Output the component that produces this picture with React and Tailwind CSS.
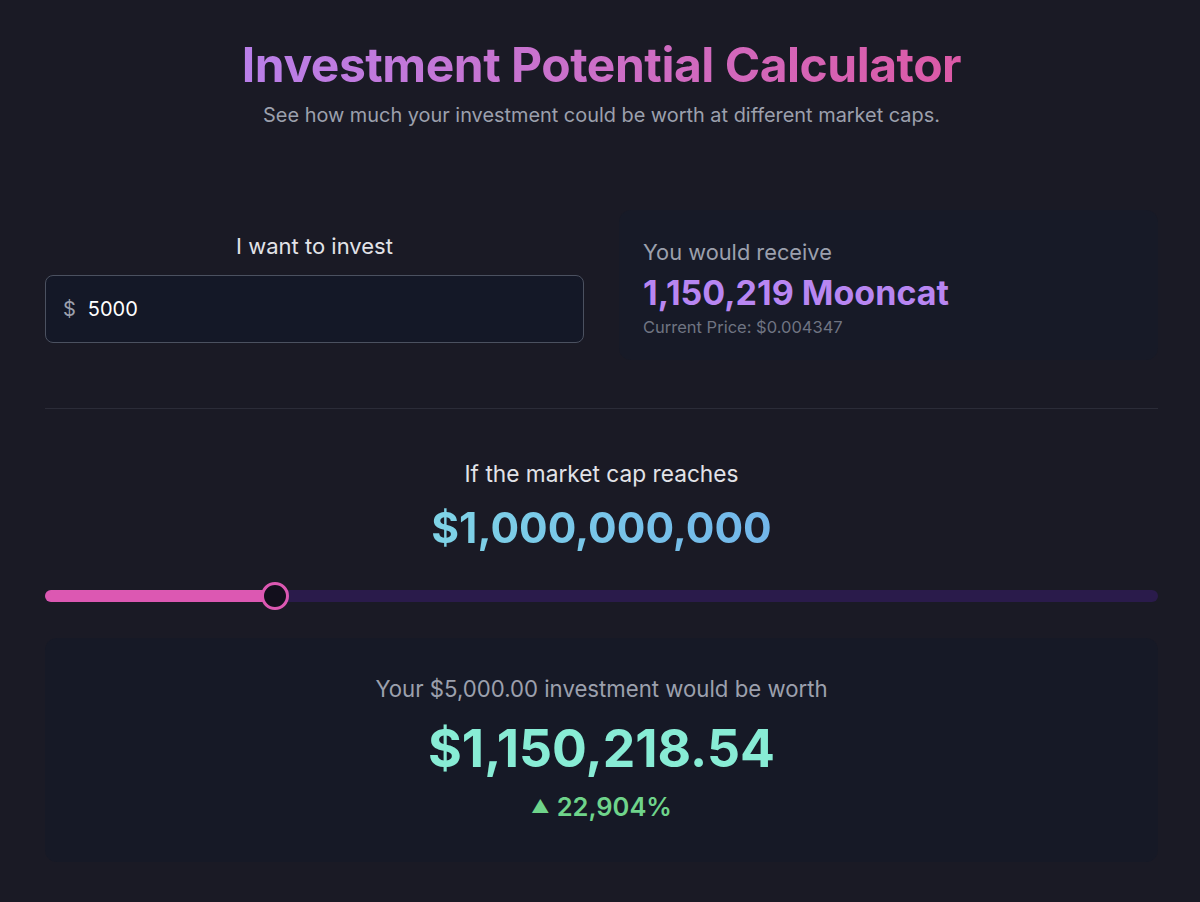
import React, { useState } from 'react';

const PRICE = 0.004347;

const fmtUsd = (n) =>
  '$' + n.toLocaleString('en-US', { minimumFractionDigits: 2, maximumFractionDigits: 2 });

const App = () => {
  const [amount, setAmount] = useState('5000');
  const [pct] = useState(20.66);

  const invest = parseFloat(amount) || 0;
  const tokens = invest / PRICE;

  return (
    <div
      className="min-h-[902px] w-full bg-[#1a1a25] text-gray-200"
      style={{ fontFamily: 'Inter, "Noto Sans", sans-serif' }}
    >
      <div className="mx-auto pl-[45px] pr-[42px] pt-[36px] pb-10">
        <div className="text-center">
          <h1 className="text-[48px] leading-[58px] font-bold tracking-[-0.5px] bg-gradient-to-r from-[#b97fe9] to-[#dc59a6] bg-clip-text text-transparent inline-block">
            Investment Potential Calculator
          </h1>
          <p className="mt-[7px] text-[19.9px] leading-[28px] text-[#9ca0ad]">
            See how much your investment could be worth at different market caps.
          </p>
        </div>

        <div className="mt-[81px] grid grid-cols-2 gap-[35px] items-center">
          <div className="flex flex-col items-center pt-[4px]">
            <label className="text-[22px] text-[#e2e3e8] leading-[30px]">I want to invest</label>
            <div className="mt-[14px] w-full h-[68px] flex items-center rounded-lg border border-[#4b5160] bg-[#141827] px-[17px]">
              <span className="text-[20px] text-[#9ca0ad] mr-[12px]">$</span>
              <input
                value={amount}
                onChange={(e) => setAmount(e.target.value)}
                className="bg-transparent outline-none text-[20px] text-white w-full"
              />
            </div>
          </div>
          <div className="h-[150px] rounded-xl bg-[#171a27] px-[24px] pt-[27px] flex flex-col">
            <div className="text-[21.8px] text-[#9ca0ad] leading-[30px]">You would receive</div>
            <div className="mt-[6px] text-[34px] font-bold text-[#b886f2] leading-[40px]">
              {Math.round(tokens).toLocaleString('en-US')} Mooncat
            </div>
            <div className="mt-[3px] text-[16.5px] text-[#6f7482] leading-[22px]">Current Price: ${PRICE}</div>
          </div>
        </div>

        <div className="mt-[48px] h-px bg-[#2b2c38]" />

        <div className="mt-[50px] text-center">
          <div className="text-[22.7px] text-[#e2e3e8] leading-[30px]">If the market cap reaches</div>
          <div className="mt-[13px] inline-block text-[42.5px] font-bold leading-[52px] bg-gradient-to-r from-[#7fd3e6] to-[#72b6ea] bg-clip-text text-transparent">
            $1,000,000,000
          </div>
        </div>

        <div className="relative mt-[36px] h-[12px] rounded-full bg-[#2a1b4b]">
          <div className="absolute left-0 top-0 h-full rounded-full bg-[#dc58b2]" style={{ width: pct + '%' }} />
          <div
            className="absolute top-1/2 -translate-x-1/2 -translate-y-1/2 w-[28px] h-[28px] rounded-full border-[3px] border-[#dc58b2] bg-[#120f1c]"
            style={{ left: pct + '%' }}
          />
        </div>

        <div className="mt-[36px] h-[224px] rounded-xl bg-[#161926] pt-[36px] flex flex-col items-center">
          <div className="text-[22.2px] text-[#9ca0ad] leading-[30px]">
            Your {fmtUsd(invest)} investment would be worth
          </div>
          <div className="mt-[14px] text-[51.7px] font-bold leading-[60px] text-[#88ecd5]">$1,150,218.54</div>
          <div className="mt-[13px] text-[25.5px] font-semibold text-[#6fd48b] leading-[32px] flex items-center gap-[7px]">
            <span className="text-[18px]">▲</span>22,904%
          </div>
        </div>
      </div>
    </div>
  );
};

export default App;
